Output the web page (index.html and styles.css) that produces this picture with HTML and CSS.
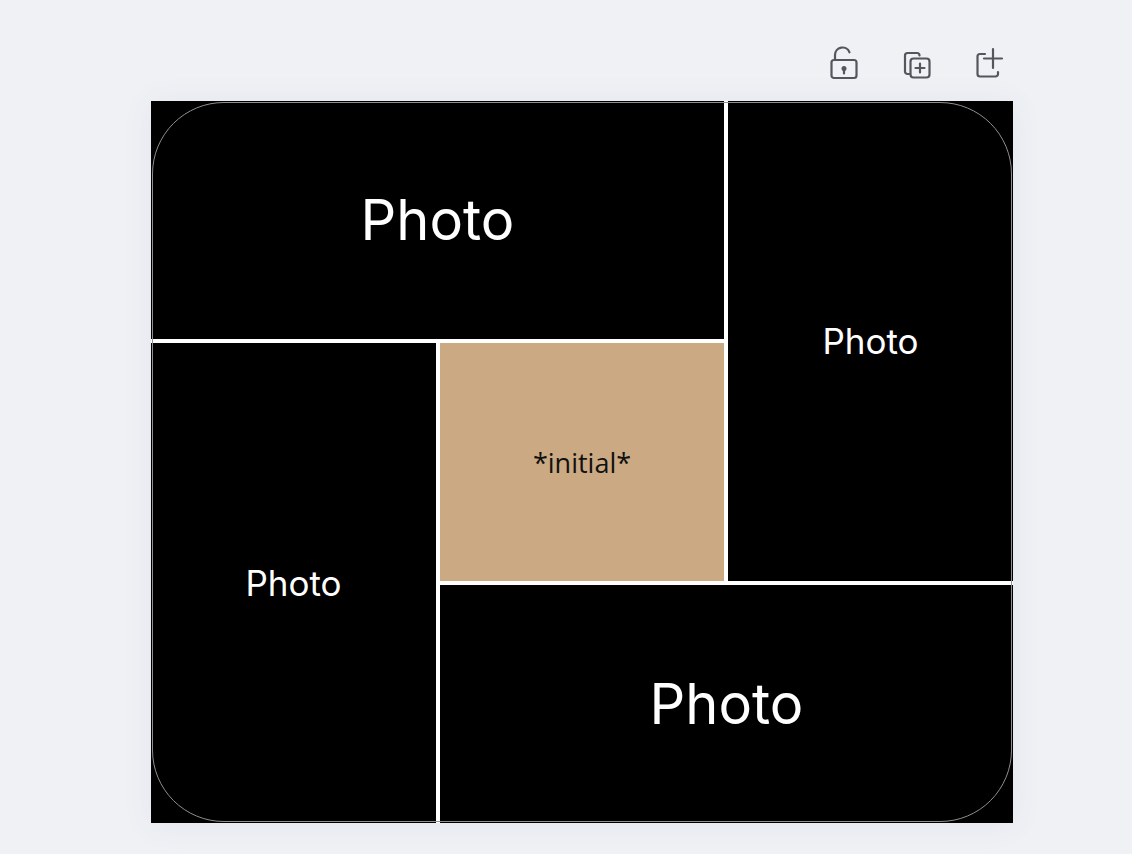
FILE: index.html
```html
<!DOCTYPE html>
<html lang="en">
<head>
<meta charset="utf-8">
<title>Layout</title>
<link rel="stylesheet" href="styles.css">
</head>
<body>
<main class="page">
  <div class="toolbar">
    <button class="tool" aria-label="Unlock">
      <svg viewBox="0 0 32 36" width="32" height="36"><g fill="none" stroke="#53565c" stroke-width="2.2" stroke-linecap="round" stroke-linejoin="round"><path d="M7 15V10a7.500 7.500 0 0 1 14.500-2.700"/><rect x="3.500" y="15" width="25" height="18" rx="2.500"/><path d="M16 25v3.500"/></g><circle cx="16" cy="23.500" r="2.500" fill="#53565c"/></svg>
    </button>
    <button class="tool" aria-label="Duplicate">
      <svg viewBox="0 0 32 36" width="32" height="36"><g fill="none" stroke="#53565c" stroke-width="2.200" stroke-linecap="round" stroke-linejoin="round"><path d="M10 29H7.500A2.500 2.500 0 0 1 5 26.500V10.500A2.500 2.500 0 0 1 7.500 8H17a2.500 2.500 0 0 1 2.500 2.500"/><rect x="10.500" y="13.500" width="19" height="19" rx="3"/><path d="M20 18.500v9M15.500 23h9"/></g></svg>
    </button>
    <button class="tool" aria-label="Add page">
      <svg viewBox="0 0 32 36" width="32" height="36"><g fill="none" stroke="#53565c" stroke-width="2.200" stroke-linecap="round" stroke-linejoin="round"><path d="M13 9H8a2.500 2.500 0 0 0-2.500 2.500V29A2.500 2.500 0 0 0 8 31.500h15.500A2.500 2.500 0 0 0 26 29v-2"/><path d="M21 4v19M12 13.500h18"/></g></svg>
    </button>
  </div>
  <section class="canvas">
    <div class="cell cell-a big">Photo</div>
    <div class="cell cell-b small">Photo</div>
    <div class="cell cell-c small">Photo</div>
    <div class="cell cell-d">*initial*</div>
    <div class="cell cell-e big">Photo</div>
    <div class="frame"></div>
  </section>
</main>
</body>
</html>
```

FILE: styles.css
```css
* { box-sizing: border-box; }
html, body { margin: 0; height: 100%; }
body { background: #eff1f5; overflow: hidden; }
.page { width: 1132px; height: 854px; padding: 45px 0 0 151px; }
.toolbar { width: 853px; height: 56px; display: flex; justify-content: flex-end; gap: 40px; align-items: flex-start; }
.tool { width: 32px; height: 36px; padding: 0; border: 0; background: none; display: block; }
.tool svg { display: block; }
.canvas {
  position: relative;
  width: 862px;
  height: 722px;
  display: grid;
  grid-template-columns: 285px 284px 285px;
  grid-template-rows: 238px 238px 238px;
  gap: 4px;
  background: #fff;
  box-shadow: 0 2px 30px rgba(64, 87, 109, .07);
  font-family: Inter, "Liberation Sans", sans-serif;
}
.cell { background: #000; color: #fff; display: flex; align-items: center; justify-content: center; }
.cell-a { grid-column: 1 / 3; grid-row: 1; }
.cell-b { grid-column: 3; grid-row: 1 / 3; }
.cell-c { grid-column: 1; grid-row: 2 / 4; }
.cell-d { grid-column: 2; grid-row: 2; background: #cbaa83; color: #111; font-family: "Open Sans", sans-serif; font-size: 27px; }
.cell-e { grid-column: 2 / 4; grid-row: 3; }
.big { font-size: 56px; }
.small { font-size: 35px; }
.frame { position: absolute; inset: 1px; border: 1.500px solid #8f8f8f; border-radius: 72px; pointer-events: none; }
```
